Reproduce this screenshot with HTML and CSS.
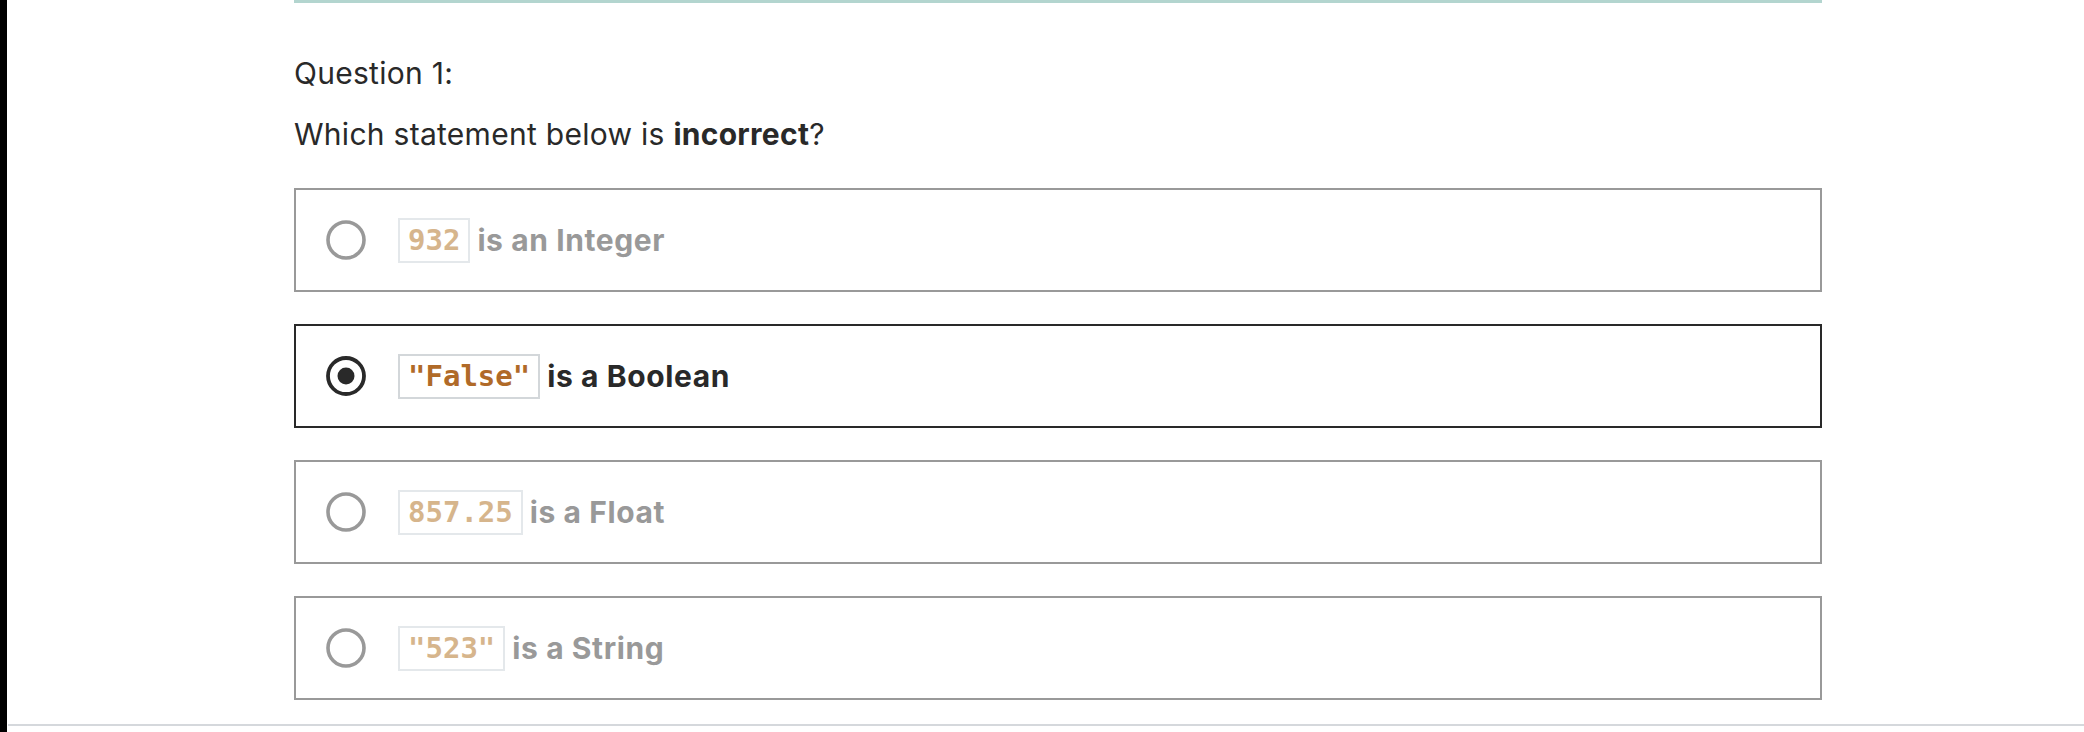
FILE: index.html
```html
<!DOCTYPE html>
<html lang="en">
<head>
<meta charset="utf-8">
<title>Question 1</title>
<link rel="stylesheet" href="styles.css">
</head>
<body>
<div class="page">
  <div class="sidebar"></div>
  <div class="main">
    <div class="content">
      <div class="topbar"></div>
      <p class="qnum">Question 1:</p>
      <p class="qtext">Which statement below is <strong>incorrect</strong>?</p>
      <div class="options">
        <div class="option">
          <svg class="radio" width="40" height="40" viewBox="0 0 40 40"><circle cx="20" cy="20" r="18" fill="none" stroke="#999" stroke-width="3.6"/></svg>
          <span class="code">932</span>
          <span class="label">is an Integer</span>
        </div>
        <div class="option selected">
          <svg class="radio" width="40" height="40" viewBox="0 0 40 40"><circle cx="20" cy="20" r="18" fill="none" stroke="#292929" stroke-width="3.8"/><circle cx="20" cy="20" r="8.5" fill="#292929"/></svg>
          <span class="code">"False"</span>
          <span class="label">is a Boolean</span>
        </div>
        <div class="option">
          <svg class="radio" width="40" height="40" viewBox="0 0 40 40"><circle cx="20" cy="20" r="18" fill="none" stroke="#999" stroke-width="3.6"/></svg>
          <span class="code">857.25</span>
          <span class="label">is a Float</span>
        </div>
        <div class="option">
          <svg class="radio" width="40" height="40" viewBox="0 0 40 40"><circle cx="20" cy="20" r="18" fill="none" stroke="#999" stroke-width="3.6"/></svg>
          <span class="code">"523"</span>
          <span class="label">is a String</span>
        </div>
      </div>
    </div>
    <div class="bottomline"></div>
  </div>
</div>
</body>
</html>
```
FILE: styles.css
```css
* { box-sizing: border-box; }
html, body { margin: 0; padding: 0; background: #fff; }
body {
  font-family: Inter, "Liberation Sans", Arial, sans-serif;
  color: #292929;
}
.page {
  display: flex;
  height: 732px;
  overflow: hidden;
}
.sidebar {
  width: 7px;
  flex: 0 0 7px;
  background: #000;
}
.main {
  flex: 1;
  padding-left: 1px;
  display: flex;
  flex-direction: column;
}
.content {
  margin-left: 286px;
  width: 1528px;
}
.topbar {
  height: 3px;
  background: #b3d5cf;
}
.qnum {
  margin: 0;
  padding-top: 50px;
  font-size: 30px;
  line-height: 40px;
  letter-spacing: 0.28px;
}
.qtext {
  margin: 21px 0 0;
  font-size: 30px;
  line-height: 40px;
  letter-spacing: 0.28px;
}
.qtext strong { font-weight: 700; }
.options {
  margin-top: 34px;
  display: flex;
  flex-direction: column;
  gap: 32px;
}
.option {
  height: 104px;
  border: 2px solid #999;
  display: flex;
  align-items: center;
  padding-left: 30px;
  color: #999;
}
.option.selected {
  border-color: #292929;
  color: #292929;
}
.radio {
  flex: 0 0 40px;
  margin-right: 32px;
}
.code {
  font-family: "DejaVu Sans Mono", "Liberation Mono", monospace;
  font-weight: 700;
  font-size: 29px;
  line-height: 41px;
  padding: 0 8px;
  border: 2px solid #e4e8eb;
  color: #d6b58c;
}
.option.selected .code {
  color: #b06a28;
  border-color: #d3d7da;
}
.label {
  margin-left: 7px;
  font-size: 30px;
  font-weight: 700;
  letter-spacing: 0.6px;
}
.bottomline {
  margin-top: 24px;
  height: 2px;
  background: #d5d8dc;
}
```
